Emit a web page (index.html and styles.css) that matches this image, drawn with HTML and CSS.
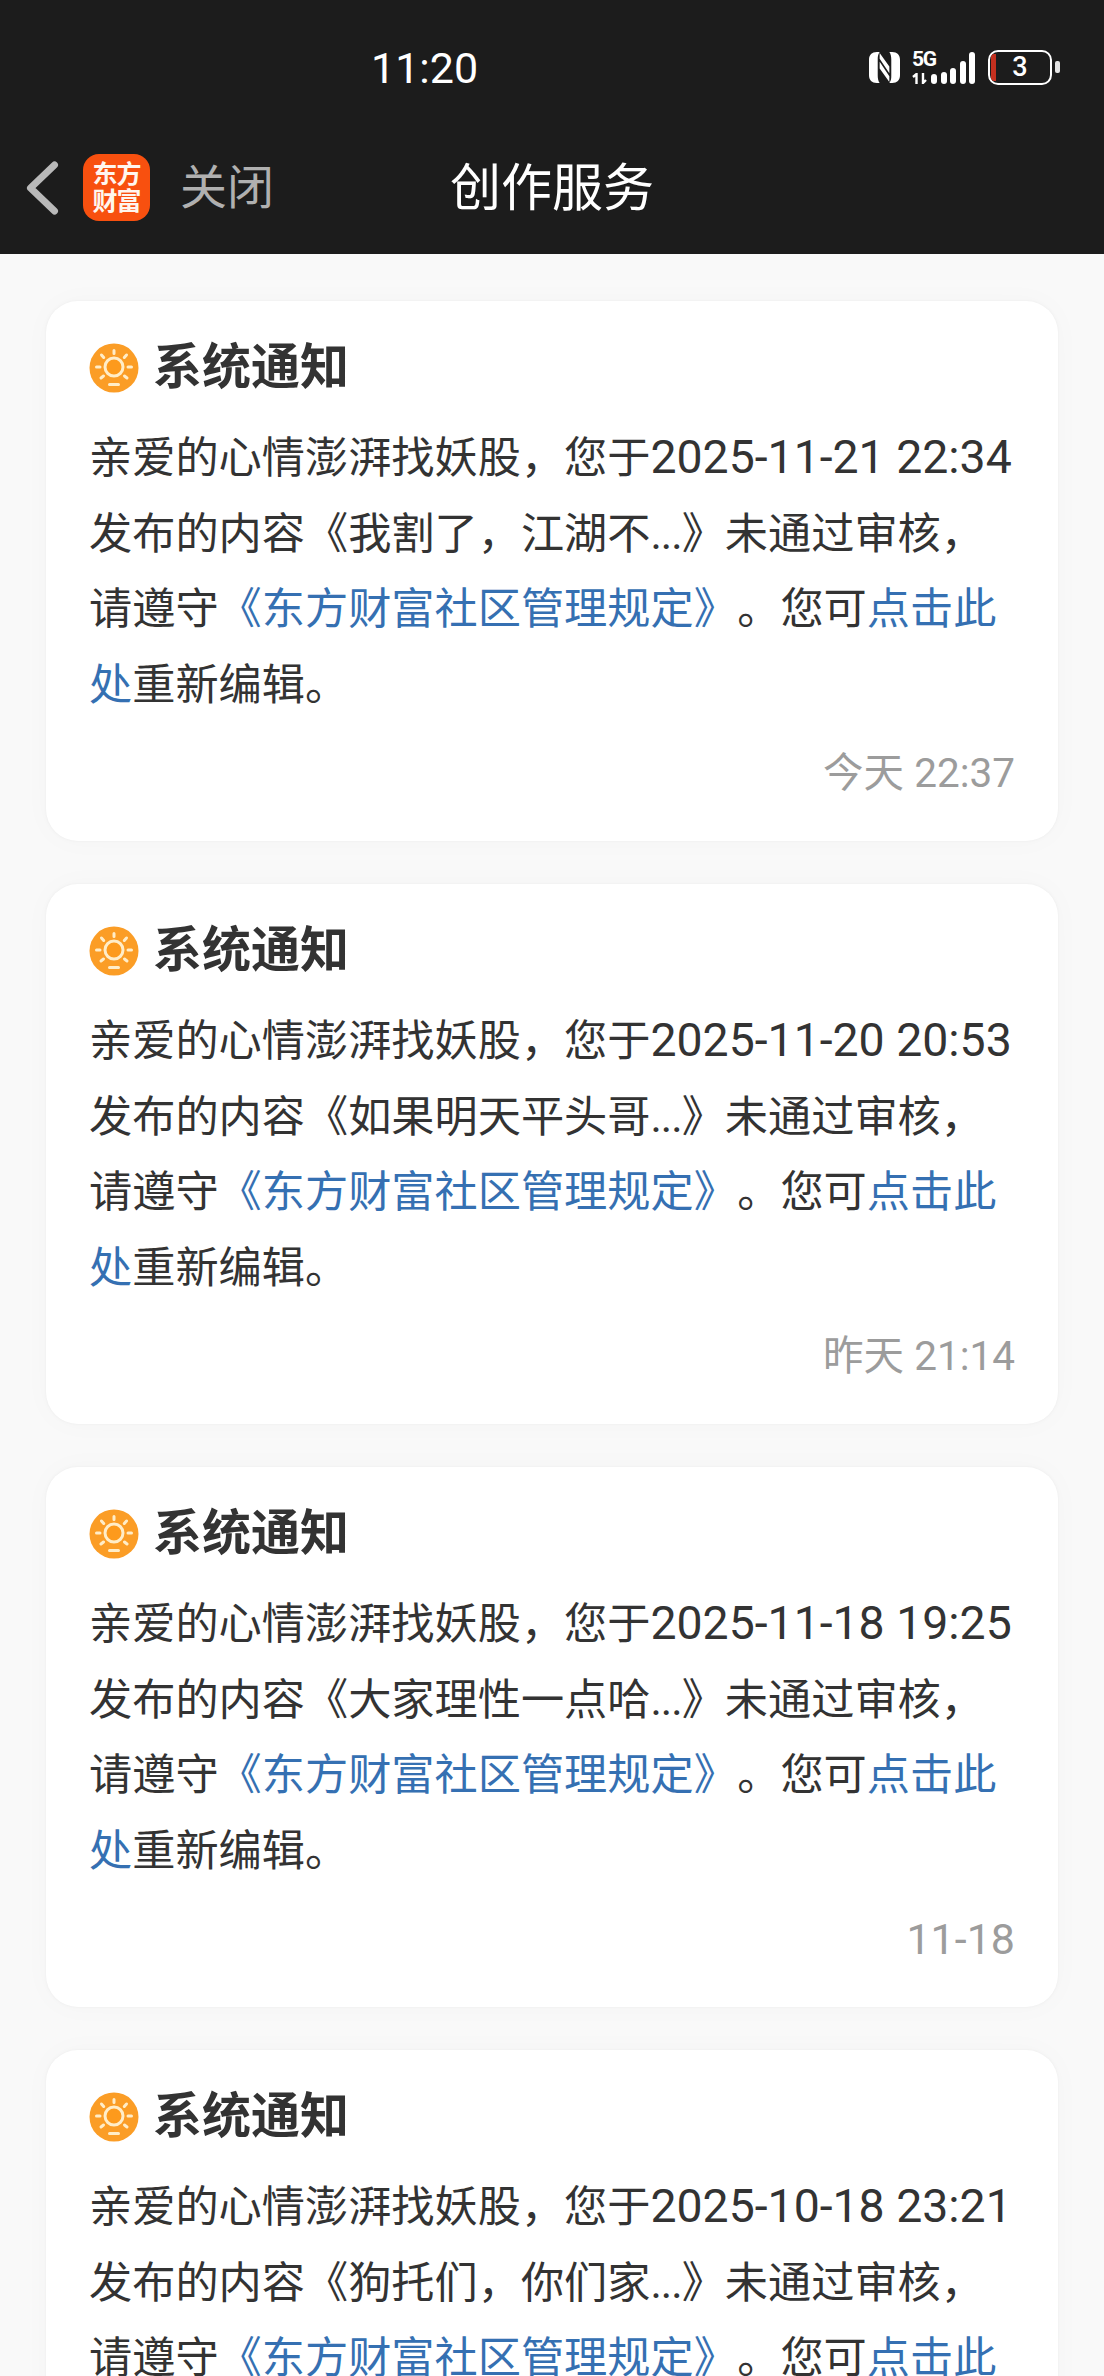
FILE: index.html
```html
<!DOCTYPE html>
<html lang="zh-CN">
<head>
<meta charset="utf-8">
<title>创作服务</title>
<link rel="stylesheet" href="styles.css">
</head>
<body>
<header class="top">
  <div class="status">
    <span class="clock">11:20</span>
    <div class="status-icons">
      <svg class="nfc" viewBox="0 0 32 32" width="31" height="31"><path fill="#fff" d="M8 0h3C9 3 9 5 9 8v16c0 3 .5 6 2 8H8c-5 0-8-3-8-8V8c0-5 3-8 8-8zM24 32h-3c2-3 2-5 2-8V8c0-3-.5-6-2-8h3c5 0 8 3 8 8v16c0 5-3 8-8 8zM11 1l10 14v7L11 7zM11 10l10 15v6L11 17z"/></svg>
      <div class="net-labels">
        <span class="g5">5G</span>
        <svg class="arrows" viewBox="0 0 15 11" width="15" height="11"><path d="M4.500 11V1L1 4M11 0v10l3-3" fill="none" stroke="#fff" stroke-width="2.400"/></svg>
      </div>
      <div class="bars"><i class="b1"></i><i class="b2"></i><i class="b3"></i><i class="b4"></i><i class="b5"></i></div>
      <div class="battery"><i class="level"></i><span>3</span></div>
      <i class="cap"></i>
    </div>
  </div>
  <nav class="nav">
    <svg class="back" viewBox="0 0 38 60" width="38" height="60"><path d="M30.500 7 6.500 30l24 23" fill="none" stroke="#b9b9b9" stroke-width="7" stroke-linecap="round" stroke-linejoin="round"/></svg>
    <div class="logo"><span>东方</span><span>财富</span></div>
    <span class="close">关闭</span>
    <h1 class="title">创作服务</h1>
  </nav>
</header>
<main class="list">
  <article class="card">
    <h2 class="head"><svg class="sun"><use href="#sun"/></svg>系统通知</h2>
    <p class="body">亲爱的心情澎湃找妖股，您于<span class="num">2025-11-21 22:34</span><br>发布的内容《我割了，江湖不<span class="dots">...</span>》未通过审核，<br>请遵守<a class="lk lk-rule">《东方财富社区管理规定》</a>。您可<a class="lk">点击此<br>处</a>重新编辑。</p>
    <time class="when">今天 22:37</time>
  </article>
  <article class="card">
    <h2 class="head"><svg class="sun"><use href="#sun"/></svg>系统通知</h2>
    <p class="body">亲爱的心情澎湃找妖股，您于<span class="num">2025-11-20 20:53</span><br>发布的内容《如果明天平头哥<span class="dots">...</span>》未通过审核，<br>请遵守<a class="lk lk-rule">《东方财富社区管理规定》</a>。您可<a class="lk">点击此<br>处</a>重新编辑。</p>
    <time class="when">昨天 21:14</time>
  </article>
  <article class="card">
    <h2 class="head"><svg class="sun"><use href="#sun"/></svg>系统通知</h2>
    <p class="body">亲爱的心情澎湃找妖股，您于<span class="num">2025-11-18 19:25</span><br>发布的内容《大家理性一点哈<span class="dots">...</span>》未通过审核，<br>请遵守<a class="lk lk-rule">《东方财富社区管理规定》</a>。您可<a class="lk">点击此<br>处</a>重新编辑。</p>
    <time class="when when-date">11-18</time>
  </article>
  <article class="card">
    <h2 class="head"><svg class="sun"><use href="#sun"/></svg>系统通知</h2>
    <p class="body">亲爱的心情澎湃找妖股，您于<span class="num">2025-10-18 23:21</span><br>发布的内容《狗托们，你们家<span class="dots">...</span>》未通过审核，<br>请遵守<a class="lk lk-rule">《东方财富社区管理规定》</a>。您可<a class="lk">点击此</a></p>
  </article>
</main>
<svg class="defs" width="0" height="0">
  <symbol id="sun" viewBox="0 0 50 50">
    <circle cx="25" cy="25" r="24.500" fill="#fb9d26"/>
    <circle cx="25" cy="24" r="9" fill="#fd9a1c" stroke="#ffedc8" stroke-width="3"/>
    <path d="M25 7.500v3M12.500 12l2.200 2.500M37.500 12l-2.200 2.500M7.500 24h3.500M39 24h3.500M12 35l2.500-2M38 35l-2.500-2M20.500 41.500h9" fill="none" stroke="#ffedc8" stroke-width="3" stroke-linecap="round"/>
  </symbol>
</svg>
</body>
</html>
```
FILE: styles.css
```css
* { box-sizing: border-box; }
html, body { margin: 0; padding: 0; }
html { height: 2376px; overflow: hidden; }
body {
  width: 1104px;
  height: 2376px;
  overflow: hidden;
  background: #f9f9f9;
  font-family: Roboto, "Noto Sans CJK SC", sans-serif;
}
.top { background: #1c1c1c; height: 254px; color: #fff; }
.status { height: 136px; display: flex; align-items: flex-start; }
.clock { margin: 44px 0 0 371px; font-size: 43px; line-height: 48px; color: #fff; }
.status-icons { margin-left: auto; margin-right: 44px; margin-top: 50px; display: flex; align-items: flex-end; height: 35px; }
.nfc { margin: 0 12px 2px 0; flex: none; }
.net-labels { display: flex; flex-direction: column; width: 19px; height: 34px; position: relative; margin-bottom: 1px; }
.g5 { font-size: 21px; font-weight: 700; line-height: 18px; letter-spacing: -1.200px; white-space: nowrap; }
.arrows { position: absolute; left: 0; bottom: 0; }
.bars { display: flex; align-items: flex-end; gap: 3.500px; margin-bottom: 1px; }
.bars i { width: 6px; background: #fff; border-radius: 3px; display: block; }
.b1 { height: 10px; } .b2 { height: 12px; } .b3 { height: 16px; } .b4 { height: 23px; } .b5 { height: 32px; }
.battery { margin-left: 13px; width: 64px; height: 35px; border: 2.500px solid #fff; border-radius: 10px; position: relative; display: flex; align-items: center; justify-content: center; font-size: 27px; line-height: 1; font-weight: 500; overflow: hidden; }
.level { position: absolute; left: 1px; top: 2px; bottom: 2px; width: 5px; background: #c4301f; border-radius: 3px 0 0 3px; }
.cap { width: 5px; height: 12px; background: #e4e4e4; border-radius: 2px; margin: 0 0 12px 3px; }

.nav { height: 118px; display: flex; align-items: center; padding-left: 24px; }
.back { margin-top: -15px; flex: none; }
.logo { width: 67px; height: 67px; margin-left: 21px; margin-top: -15px; flex: none; background: #f8500f; border-radius: 16px; display: flex; flex-direction: column; align-items: center; justify-content: center; color: #fff6ee; font-size: 25px; line-height: 27px; font-weight: 700; letter-spacing: -1px; }
.logo span { display: block; }
.close { margin-left: 30px; margin-top: -15px; font-size: 47px; line-height: 56px; color: #b0b0b0; font-weight: 400; }
.title { margin: -13px 0 0 0; position: absolute; left: 0; right: 0; text-align: center; font-size: 51px; line-height: 60px; font-weight: 400; color: #fff; }

.list { height: 2122px; overflow: hidden; padding: 47px 46px 0; display: flex; flex-direction: column; gap: 43px; }
.card { background: #fff; height: 540px; flex: none; border-radius: 32px; padding: 38px 43px 0 43px; box-shadow: 0 0 3px rgba(0,0,0,.05), 0 0 30px rgba(0,0,0,.025); position: relative; }
.head { margin: 0; display: flex; align-items: center; gap: 14px; font-size: 49px; line-height: 58px; font-weight: 700; color: #333; }
.sun { width: 50px; height: 50px; flex: none; }
.body { margin: 24px 0 0; font-size: 43.200px; line-height: 75.700px; color: #333; white-space: nowrap; }
.num { font-size: 46.400px; line-height: 1; }
.dots { letter-spacing: -1px; }
.lk { color: #3570b2; }
.lk-rule { margin-right: 22px; }
.when { position: absolute; right: 43px; bottom: 44px; font-size: 40.500px; line-height: 48px; color: #9c9c9c; }
.when-date { font-size: 43px; }
.defs { position: absolute; }
```
